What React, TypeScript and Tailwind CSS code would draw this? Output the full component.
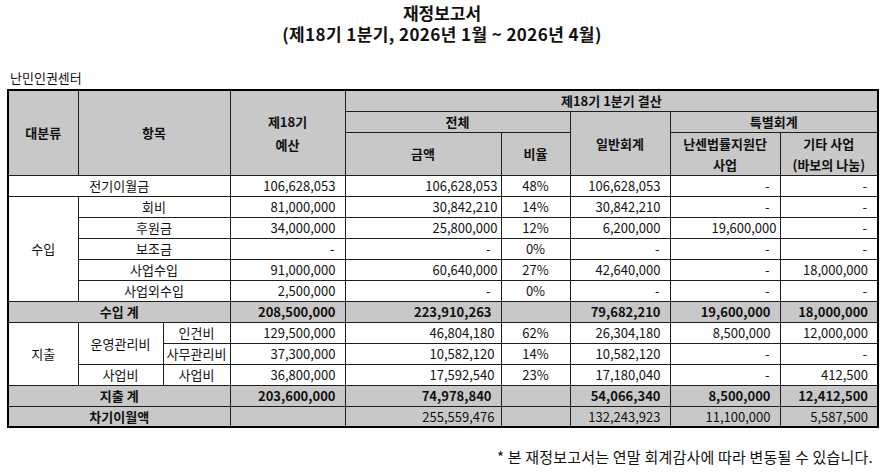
import React from 'react';

const td = 'border border-[#1e1e1e] p-0 whitespace-nowrap';
const th = 'border border-[#1e1e1e] p-0 bg-[#c8c8c8] font-bold text-center align-middle whitespace-nowrap';

function Num({ v, pr = 'pr-[9px]', bold = false, gray = false }: { v: string; pr?: string; bold?: boolean; gray?: boolean }) {
  const dash = v === '-';
  return (
    <td
      className={`${td} text-right ${dash ? 'pr-[10px]' : pr} ${bold ? 'font-bold' : ''} ${gray ? 'bg-[#c8c8c8]' : ''}`}
    >
      {v}
    </td>
  );
}

function Pct({ v, gray = false }: { v: string; gray?: boolean }) {
  return <td className={`${td} text-center ${gray ? 'bg-[#c8c8c8]' : ''}`}>{v}</td>;
}

export default function App() {
  return (
    <div className="w-[887px] h-[476px] bg-white text-[#111] pl-[7px] pr-[10px] pt-[2px] font-['Noto_Sans_CJK_KR','Noto_Sans',sans-serif]">
      <div className="text-center font-bold text-[17px] leading-[21px]">
        <div>재정보고서</div>
        <div className="tracking-[0.4px]">(제18기 1분기, 2026년 1월 ~ 2026년 4월)</div>
      </div>

      <div className="mt-[25px] pl-[3px] text-[13px] leading-[18px]">난민인권센터</div>

      <table className="mt-[2px] w-[870px] table-fixed border-collapse border-2 border-black text-[13px] leading-none">
        <colgroup>
          <col className="w-[70px]" />
          <col className="w-[85px]" />
          <col className="w-[67px]" />
          <col className="w-[115px]" />
          <col className="w-[156px]" />
          <col className="w-[69px]" />
          <col className="w-[100px]" />
          <col className="w-[110px]" />
          <col className="w-[98px]" />
        </colgroup>
        <thead>
          <tr className="h-[21px]">
            <th rowSpan={3} className={th}>
              대분류
            </th>
            <th rowSpan={3} colSpan={2} className={th}>
              항목
            </th>
            <th rowSpan={3} className={`${th} leading-[23px]`}>
              제18기
              <br />
              예산
            </th>
            <th colSpan={5} className={th}>
              제18기 1분기 결산
            </th>
          </tr>
          <tr className="h-[21px]">
            <th colSpan={2} className={th}>
              전체
            </th>
            <th rowSpan={2} className={th}>
              일반회계
            </th>
            <th colSpan={2} className={th}>
              특별회계
            </th>
          </tr>
          <tr className="h-[42px]">
            <th className={th}>금액</th>
            <th className={th}>비율</th>
            <th className={`${th} leading-[21px]`}>
              난센법률지원단
              <br />
              사업
            </th>
            <th className={`${th} leading-[21px]`}>
              기타 사업
              <br />
              (바보의 나눔)
            </th>
          </tr>
        </thead>
        <tbody>
          <tr className="h-[21px]">
            <td colSpan={3} className={`${td} text-center`}>
              전기이월금
            </td>
            <Num v="106,628,053" />
            <Num v="106,628,053" pr="pr-[3px]" />
            <Pct v="48%" />
            <Num v="106,628,053" />
            <Num v="-" />
            <Num v="-" />
          </tr>

          <tr className="h-[21px]">
            <td rowSpan={5} className={`${td} text-center`}>
              수입
            </td>
            <td colSpan={2} className={`${td} text-center`}>
              회비
            </td>
            <Num v="81,000,000" />
            <Num v="30,842,210" pr="pr-[3px]" />
            <Pct v="14%" />
            <Num v="30,842,210" />
            <Num v="-" />
            <Num v="-" />
          </tr>
          <tr className="h-[21px]">
            <td colSpan={2} className={`${td} text-center`}>
              후원금
            </td>
            <Num v="34,000,000" />
            <Num v="25,800,000" pr="pr-[3px]" />
            <Pct v="12%" />
            <Num v="6,200,000" />
            <Num v="19,600,000" pr="pr-[3px]" />
            <Num v="-" />
          </tr>
          <tr className="h-[21px]">
            <td colSpan={2} className={`${td} text-center`}>
              보조금
            </td>
            <Num v="-" />
            <Num v="-" />
            <Pct v="0%" />
            <Num v="-" />
            <Num v="-" />
            <Num v="-" />
          </tr>
          <tr className="h-[21px]">
            <td colSpan={2} className={`${td} text-center`}>
              사업수입
            </td>
            <Num v="91,000,000" />
            <Num v="60,640,000" pr="pr-[3px]" />
            <Pct v="27%" />
            <Num v="42,640,000" />
            <Num v="-" />
            <Num v="18,000,000" />
          </tr>
          <tr className="h-[21px]">
            <td colSpan={2} className={`${td} text-center`}>
              사업외수입
            </td>
            <Num v="2,500,000" />
            <Num v="-" />
            <Pct v="0%" />
            <Num v="-" />
            <Num v="-" />
            <Num v="-" />
          </tr>

          <tr className="h-[21px]">
            <td colSpan={3} className={`${td} text-center font-bold bg-[#c8c8c8]`}>
              수입 계
            </td>
            <Num v="208,500,000" bold gray />
            <Num v="223,910,263" bold gray />
            <Pct v="" gray />
            <Num v="79,682,210" bold gray />
            <Num v="19,600,000" bold gray />
            <Num v="18,000,000" bold gray />
          </tr>

          <tr className="h-[21px]">
            <td rowSpan={3} className={`${td} text-center`}>
              지출
            </td>
            <td rowSpan={2} className={`${td} text-center`}>
              운영관리비
            </td>
            <td className={`${td} text-center`}>인건비</td>
            <Num v="129,500,000" />
            <Num v="46,804,180" pr="pr-[6px]" />
            <Pct v="62%" />
            <Num v="26,304,180" />
            <Num v="8,500,000" />
            <Num v="12,000,000" />
          </tr>
          <tr className="h-[21px]">
            <td className={`${td} text-center`}>사무관리비</td>
            <Num v="37,300,000" />
            <Num v="10,582,120" pr="pr-[6px]" />
            <Pct v="14%" />
            <Num v="10,582,120" />
            <Num v="-" />
            <Num v="-" />
          </tr>
          <tr className="h-[21px]">
            <td className={`${td} text-center`}>사업비</td>
            <td className={`${td} text-center`}>사업비</td>
            <Num v="36,800,000" />
            <Num v="17,592,540" pr="pr-[6px]" />
            <Pct v="23%" />
            <Num v="17,180,040" />
            <Num v="-" />
            <Num v="412,500" />
          </tr>

          <tr className="h-[21px]">
            <td colSpan={3} className={`${td} text-center font-bold bg-[#c8c8c8]`}>
              지출 계
            </td>
            <Num v="203,600,000" bold gray />
            <Num v="74,978,840" bold gray />
            <Pct v="" gray />
            <Num v="54,066,340" bold gray />
            <Num v="8,500,000" bold gray />
            <Num v="12,412,500" bold gray />
          </tr>
          <tr className="h-[21px]">
            <td colSpan={3} className={`${td} text-center font-bold bg-[#c8c8c8]`}>
              차기이월액
            </td>
            <Pct v="" gray />
            <Num v="255,559,476" pr="pr-[6px]" gray />
            <Pct v="" gray />
            <Num v="132,243,923" gray />
            <Num v="11,100,000" gray />
            <Num v="5,587,500" gray />
          </tr>
        </tbody>
      </table>

      <div className="mt-[19px] pr-[4px] text-right text-[15px] leading-[20px] tracking-[0.2px]">
        * 본 재정보고서는 연말 회계감사에 따라 변동될 수 있습니다.
      </div>
    </div>
  );
}
